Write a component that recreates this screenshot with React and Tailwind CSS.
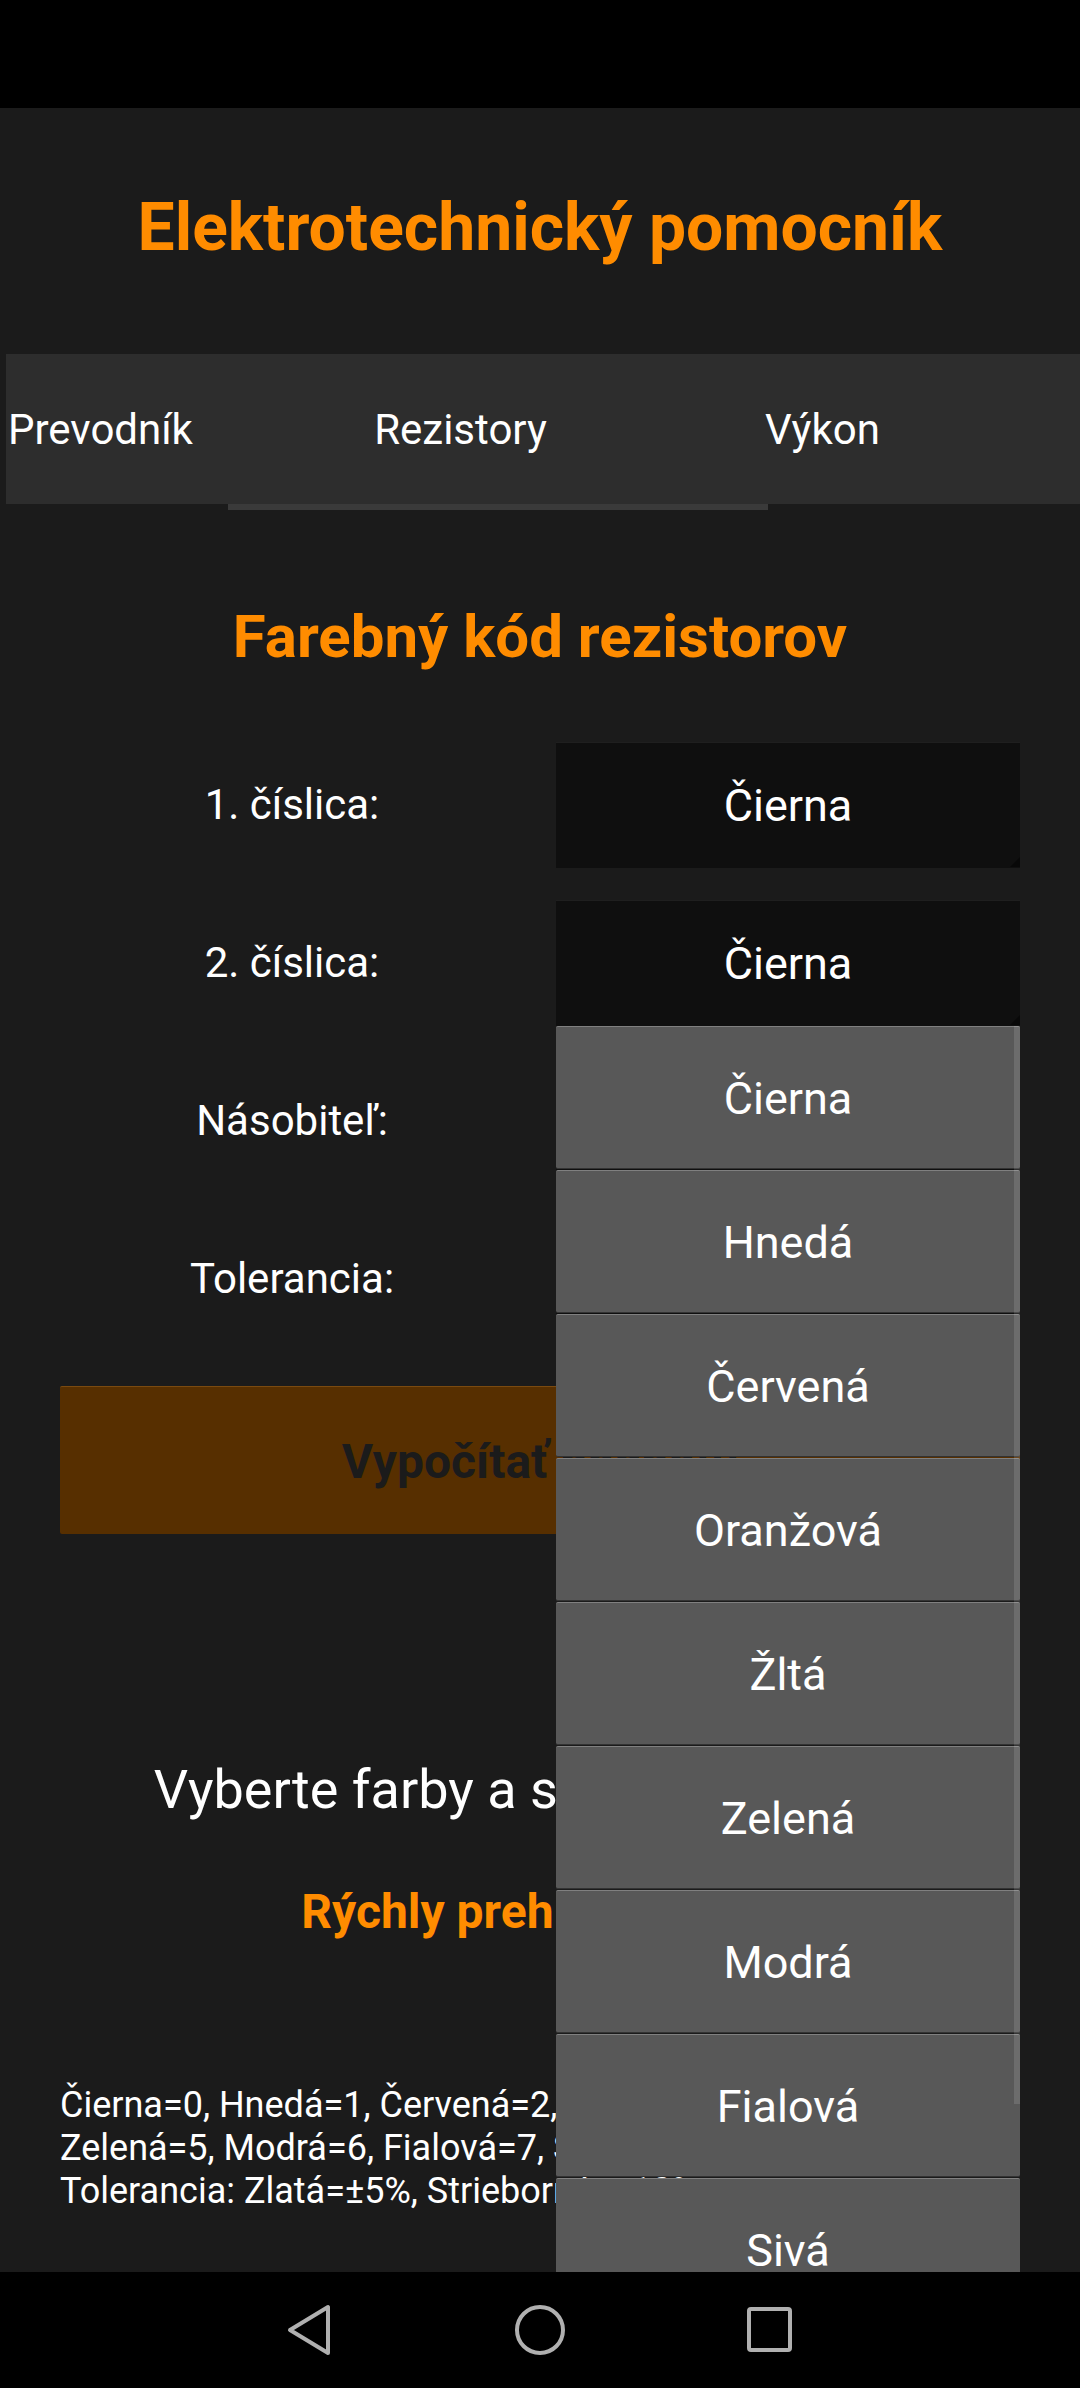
import React from "react";

const COLORS = ["Čierna", "Hnedá", "Červená", "Oranžová", "Žltá", "Zelená", "Modrá", "Fialová", "Sivá"];
const FIELDS = [
  ["digit1", "1. číslica:"],
  ["digit2", "2. číslica:"],
  ["multiplier", "Násobiteľ:"],
  ["tolerance", "Tolerancia:"],
];

function Spinner({ id, label, open }) {
  return (
    <>
      <label htmlFor={id} className="text-center text-[42px] leading-[50px]">
        {label}
      </label>
      <div className="relative h-[126px]">
        <select
          id={id}
          className="block h-[126px] w-full appearance-none border-t border-[#1f1f1f] bg-[#0f0f0f] text-center text-[45px] text-white outline-none [text-align-last:center]"
        >
          {COLORS.map((c) => (
            <option key={c}>{c}</option>
          ))}
        </select>
        <svg className="absolute right-0 bottom-px size-[10px]" viewBox="0 0 10 10" aria-hidden="true">
          <path d="M10 0V10H0Z" fill="#080808" />
        </svg>
        {open && <Dropdown />}
      </div>
    </>
  );
}

function Dropdown() {
  return (
    <div className="absolute top-full left-0 z-10 w-full">
      {COLORS.map((c) => (
        <div key={c} className="h-[144px] pb-px">
          <button className="block h-[143px] w-full rounded-[2px] border-t border-b border-t-[#808080] border-b-[#333333] bg-[#585858] pt-[2px] text-center text-[45px]">
            {c}
          </button>
        </div>
      ))}
      <div className="absolute top-0 right-0 h-[1078px] w-[6px] bg-white/12" />
    </div>
  );
}

export default function App() {
  return (
    <div className="flex min-h-screen flex-col bg-black text-white" style={{ fontFamily: 'Roboto, "Noto Sans", sans-serif' }}>
      <div className="h-[108px]" />
      <main className="relative flex flex-1 flex-col overflow-hidden bg-[#1b1b1b]">
        <h1 className="mt-[80px] text-center text-[66px] leading-[80px] font-bold text-[#ff8c00]">Elektrotechnický pomocník</h1>

        <nav className="mt-[86px] ml-[6px] flex h-[150px] bg-[#2d2d2d] text-[42px]">
          <button className="w-[222px] shrink-0 pl-[2px] text-left">Prevodník</button>
          <button className="relative w-1/2 shrink-0 pr-[72px]">
            Rezistory
            <span className="absolute top-full left-0 h-[6px] w-[50vw] bg-[#3a3a3a]" />
          </button>
          <button className="pr-[204px]">Výkon</button>
        </nav>

        <section className="flex flex-col px-[60px]">
          <h2 className="mt-[97px] text-center text-[60px] leading-[72px] font-bold text-[#ff8c00]">Farebný kód rezistorov</h2>
          <div className="mt-[69px] grid grid-cols-2 items-center gap-x-[32px] gap-y-[32px]">
            {FIELDS.map(([id, label]) => (
              <Spinner key={id} id={id} label={label} open={id === "digit2"} />
            ))}
          </div>
          <button className="mt-[44px] h-[148px] rounded-[2px] border-t border-[#7a4a10] bg-[#572f00] pt-[2px] text-[48px] font-bold text-[#1b1b1b]">
            Vypočítať hodnotu
          </button>
          <p className="mt-[224px] text-center text-[54px] leading-[64px]">Vyberte farby a stlačte vypočítať</p>
          <h3 className="mt-[62px] text-center text-[48px] leading-[56px] font-bold text-[#ff8c00]">Rýchly prehľad kódov:</h3>
          <p className="mt-[144px] text-[36px] leading-[43px]">
            Čierna=0, Hnedá=1, Červená=2, Oranžová=3, Žltá=4
            <br />
            Zelená=5, Modrá=6, Fialová=7, Sivá=8, Biela=9
            <br />
            Tolerancia: Zlatá=±5%, Strieborná=±10%
          </p>
        </section>
      </main>

      <nav className="flex h-[116px] items-center justify-center gap-[176px]">
        <button aria-label="Späť">
          <svg className="size-[54px]" viewBox="0 0 54 54" fill="none" stroke="#b0b0b0" strokeWidth="4" strokeLinejoin="round">
            <path d="M45 4V50L7 27Z" />
          </svg>
        </button>
        <button aria-label="Domov">
          <svg className="size-[54px]" viewBox="0 0 54 54" fill="none" stroke="#b0b0b0" strokeWidth="4">
            <circle cx="27" cy="27" r="23" />
          </svg>
        </button>
        <button aria-label="Prehľad">
          <svg className="size-[54px]" viewBox="0 0 54 54" fill="none" stroke="#b0b0b0" strokeWidth="4">
            <rect x="6" y="6" width="41" height="41" rx="2" />
          </svg>
        </button>
      </nav>
    </div>
  );
}
